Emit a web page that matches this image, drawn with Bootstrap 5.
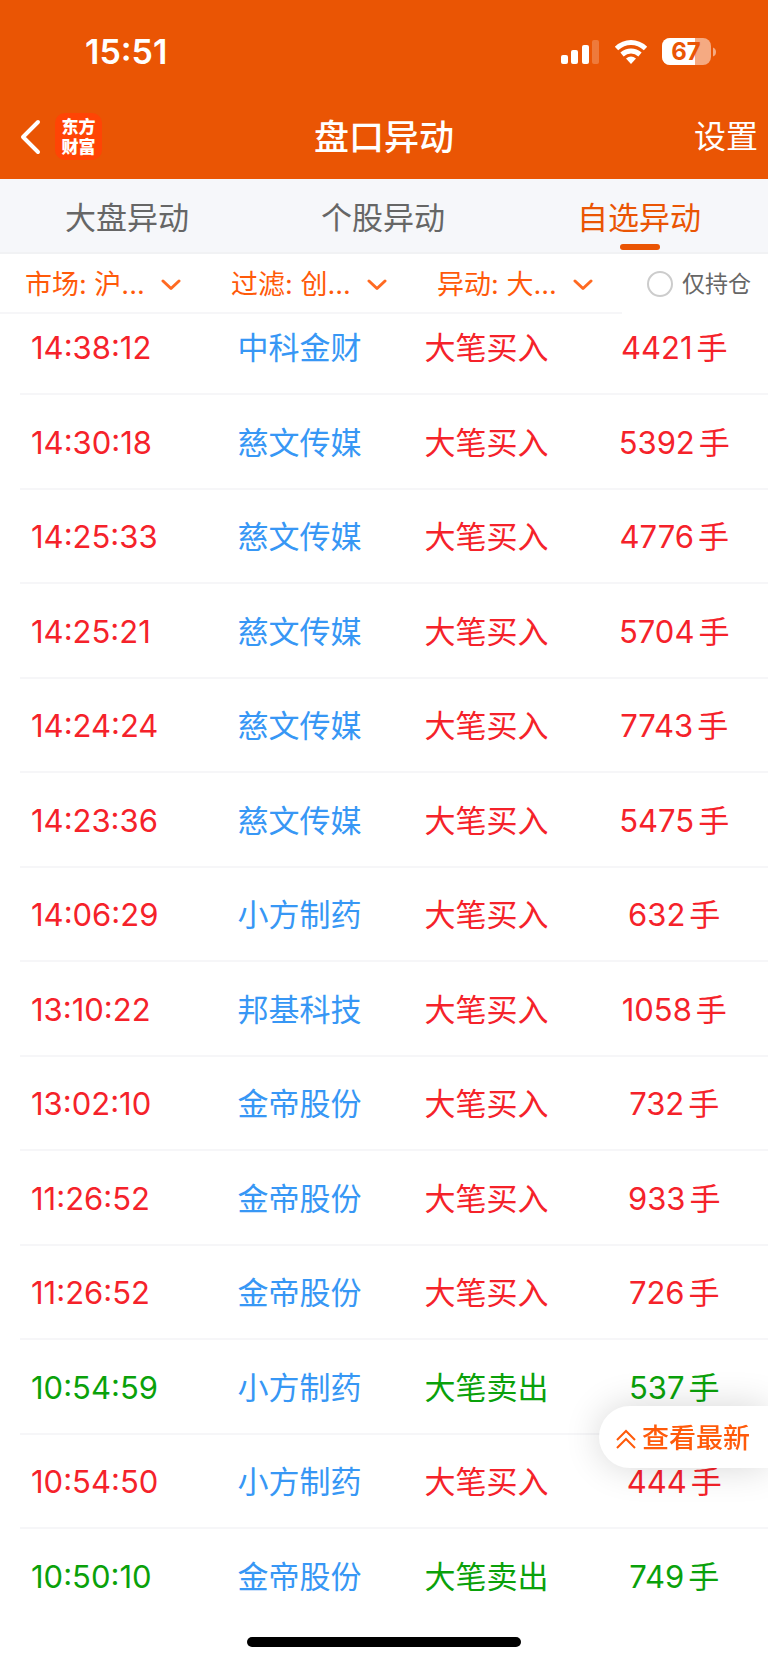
<!DOCTYPE html>
<html lang="zh-CN">
<head>
<meta charset="utf-8">
<meta name="viewport" content="width=device-width, initial-scale=1">
<title>盘口异动</title>
<link href="https://cdn.jsdelivr.net/npm/bootstrap@5.3.0/dist/css/bootstrap.min.css" rel="stylesheet">
<style>
  :root { --brand: #ea5504; --accent: #ff5a0a; --rise: #f5222a; --fall: #0aa10a; --stock: #3797f5; --rule: #f6f6f8; }
  body { font-family: Inter, "Noto Sans CJK SC", sans-serif; background: #fff; color: #666; }
  button, select, input { font-family: inherit; }
  .app-top { background: var(--brand); color: #fff; }
  .status { height: 96px; padding: 8px 51px 0 85px; }
  .clock { font-size: 34px; line-height: 40px; font-weight: 600; }
  .status-icons { gap: 14px; }
  .title-bar { height: 83px; padding: 0 10px 2px; }
  .title-bar h1 { font-size: 35px; line-height: 48px; font-weight: 500; }
  .side { flex: 1 1 0; }
  .plain { border: 0; background: none; padding: 0; color: inherit; }
  .back { margin: 0 13px 0 10px; }
  .setting { font-size: 32px; line-height: 44px; }
  .logo { width: 47px; height: 47px; border-radius: 10px; background: #ff4405; font-family: "Noto Sans CJK SC", sans-serif; font-size: 17px; line-height: 20px; font-weight: 900; padding-top: 3px; }
  .logo span { display: block; }
  .tabs { background: #f6f7fa; border-bottom: 2px solid #f1f2f4; height: 75px; }
  .tabs .tab { color: #666; font-size: 31px; line-height: 44px; padding: 17px 2px 14px 0; position: relative; text-decoration: none; }
  .tabs .tab.active { color: var(--brand); }
  .tabs .tab.active::after { content: ""; position: absolute; left: 50%; bottom: 4px; width: 40px; height: 6px; margin-left: -20px; border-radius: 3px; background: var(--brand); }
  .filters { height: 60px; }
  .picks { width: 81%; padding: 4px 4px 0 0; border-bottom: 2px solid var(--rule); }
  .pick { appearance: none; border: 0; width: 100%; color: var(--accent); font-size: 27px; line-height: 36px; padding: 0 0 0 25px; outline-offset: -2px;
    background: url("data:image/svg+xml,%3Csvg xmlns='http://www.w3.org/2000/svg' width='20' height='12' fill='none' stroke='%23ff6a22' stroke-width='3' stroke-linecap='round' stroke-linejoin='round'%3E%3Cpath d='M2 2l8 7.500 8-7.500'/%3E%3C/svg%3E") no-repeat right 25px center; }
  .hold { gap: 9px; font-size: 23px; line-height: 32px; padding-right: 17px; }
  .hold input { appearance: none; width: 26px; height: 26px; border: 2px solid #ccc; border-radius: 50%; margin: 0; }
  .hold input:checked { background: var(--accent); border-color: var(--accent); }
  .feed { padding-left: 20px; }
  .feed table { table-layout: fixed; width: 100%; font-size: 31px; line-height: 44px; }
  .feed td { height: 94px; padding: 0 2px 23px 0; vertical-align: bottom; text-align: center; border-bottom: 2px solid var(--rule); white-space: nowrap; }
  .feed tr:nth-child(even) td { height: 95px; }
  .feed tr:first-child td { height: 80px; }
  .feed tr:last-child td { border-bottom-color: transparent; }
  .feed td:first-child { text-align: left; padding-left: 11px; }
  .feed td:last-child { padding-right: 8px; }
  .feed td span { margin-left: 4px; }
  .c-time { width: 26%; } .c-name { width: 23%; } .c-kind { width: 27%; } .c-lots { width: 24%; }
  .buy { color: var(--rise); } .sell { color: var(--fall); } .stock, .stock:hover { color: var(--stock); text-decoration: none; }
  .latest { right: 0; bottom: 195px; height: 62px; padding: 3px 18px 0 17px; gap: 6px; border: 0; border-radius: 31px 0 0 31px; background: #fff; color: var(--accent); font-size: 27px; line-height: 36px; font-weight: 500; box-shadow: 0 0 36px rgba(0,0,0,.16); }
  .home { padding: 13px 0 17px; }
  .home div { width: 274px; height: 10px; border-radius: 5px; background: #000; }
</style>
</head>
<body>
<header class="app-top">
  <div class="status d-flex align-items-center justify-content-between">
    <div class="clock">15:51</div>
    <div class="status-icons d-flex align-items-center">
      <svg width="39" height="26" fill="#fff" aria-label="信号"><rect x="0" y="16" width="7" height="9" rx="2"/><rect x="10" y="11" width="7" height="14" rx="2"/><rect x="21" y="6" width="7" height="19" rx="2"/><rect x="31" y="1" width="7" height="24" rx="2" opacity=".22"/></svg>
      <svg width="34" height="26" fill="none" stroke="#fff" stroke-width="5" aria-label="无线网络"><path d="M2.500 9.500Q9 3.500 17 3.500T31.500 9.500"/><path d="M8 15.500Q12 12 17 12T26 15.500"/><path d="M12 19.500Q17 15.500 22 19.500L17 25Z" fill="#fff" stroke="none"/></svg>
      <svg width="55" height="28" aria-label="电量 67%"><defs><clipPath id="cell"><rect width="49" height="27" rx="8"/></clipPath></defs><g clip-path="url(#cell)"><rect width="49" height="27" fill="#f5aa82"/><rect width="33" height="27" fill="#fff"/></g><path d="M51 9.500q3 1 3 4.500t-3 4.500z" fill="#f5aa82"/><text x="24" y="22" text-anchor="middle" font-family="Inter" font-size="24" font-weight="700" fill="#ea5504">67</text></svg>
    </div>
  </div>
  <nav class="title-bar d-flex align-items-center">
    <div class="side d-flex align-items-center">
      <button class="plain back d-flex" type="button" aria-label="返回"><svg width="22" height="36" fill="none" stroke="#fff" stroke-width="4" stroke-linecap="round" stroke-linejoin="round"><path d="M18 3L3 18L18 33"/></svg></button>
      <div class="logo text-center"><span>东方</span><span>财富</span></div>
    </div>
    <h1 class="m-0">盘口异动</h1>
    <div class="side text-end"><button class="plain setting" type="button">设置</button></div>
  </nav>
</header>
<nav class="tabs row g-0 text-center">
  <a class="tab col" href="#market">大盘异动</a>
  <a class="tab col" href="#stocks">个股异动</a>
  <a class="tab col active" href="#watchlist" aria-current="page">自选异动</a>
</nav>
<form class="filters d-flex">
  <div class="picks row g-0 align-items-center">
    <div class="col"><select class="pick" aria-label="市场"><option>市场: 沪...</option></select></div>
    <div class="col"><select class="pick" aria-label="过滤"><option>过滤: 创...</option></select></div>
    <div class="col"><select class="pick" aria-label="异动"><option>异动: 大...</option></select></div>
  </div>
  <label class="hold flex-fill d-flex align-items-center justify-content-end text-nowrap"><input type="checkbox">仅持仓</label>
</form>
<main class="feed">
  <table>
    <colgroup><col class="c-time"><col class="c-name"><col class="c-kind"><col class="c-lots"></colgroup>
    <tbody>
      <tr class="buy"><td>14:38:12</td><td><a class="stock" href="#">中科金财</a></td><td>大笔买入</td><td>4421<span>手</span></td></tr>
      <tr class="buy"><td>14:30:18</td><td><a class="stock" href="#">慈文传媒</a></td><td>大笔买入</td><td>5392<span>手</span></td></tr>
      <tr class="buy"><td>14:25:33</td><td><a class="stock" href="#">慈文传媒</a></td><td>大笔买入</td><td>4776<span>手</span></td></tr>
      <tr class="buy"><td>14:25:21</td><td><a class="stock" href="#">慈文传媒</a></td><td>大笔买入</td><td>5704<span>手</span></td></tr>
      <tr class="buy"><td>14:24:24</td><td><a class="stock" href="#">慈文传媒</a></td><td>大笔买入</td><td>7743<span>手</span></td></tr>
      <tr class="buy"><td>14:23:36</td><td><a class="stock" href="#">慈文传媒</a></td><td>大笔买入</td><td>5475<span>手</span></td></tr>
      <tr class="buy"><td>14:06:29</td><td><a class="stock" href="#">小方制药</a></td><td>大笔买入</td><td>632<span>手</span></td></tr>
      <tr class="buy"><td>13:10:22</td><td><a class="stock" href="#">邦基科技</a></td><td>大笔买入</td><td>1058<span>手</span></td></tr>
      <tr class="buy"><td>13:02:10</td><td><a class="stock" href="#">金帝股份</a></td><td>大笔买入</td><td>732<span>手</span></td></tr>
      <tr class="buy"><td>11:26:52</td><td><a class="stock" href="#">金帝股份</a></td><td>大笔买入</td><td>933<span>手</span></td></tr>
      <tr class="buy"><td>11:26:52</td><td><a class="stock" href="#">金帝股份</a></td><td>大笔买入</td><td>726<span>手</span></td></tr>
      <tr class="sell"><td>10:54:59</td><td><a class="stock" href="#">小方制药</a></td><td>大笔卖出</td><td>537<span>手</span></td></tr>
      <tr class="buy"><td>10:54:50</td><td><a class="stock" href="#">小方制药</a></td><td>大笔买入</td><td>444<span>手</span></td></tr>
      <tr class="sell"><td>10:50:10</td><td><a class="stock" href="#">金帝股份</a></td><td>大笔卖出</td><td>749<span>手</span></td></tr>
    </tbody>
  </table>
</main>
<button class="latest position-fixed d-flex align-items-center" type="button">
  <svg width="20" height="20" fill="none" stroke="currentColor" stroke-width="2"><path d="M1 11L10 2L19 11M1 19L10 10L19 19"/></svg>查看最新
</button>
<footer class="home d-flex justify-content-center"><div></div></footer>
<script src="https://cdn.jsdelivr.net/npm/bootstrap@5.3.0/dist/js/bootstrap.bundle.min.js"></script>
</body>
</html>
